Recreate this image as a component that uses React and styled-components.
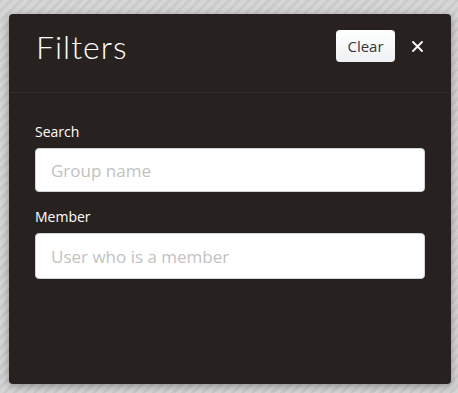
import React from "react";
import styled, { createGlobalStyle } from "styled-components";

const GlobalStyle = createGlobalStyle`
  html, body {
    margin: 0;
    padding: 0;
  }
  body {
    width: 458px;
    height: 393px;
    overflow: hidden;
    background: repeating-linear-gradient(
      -45deg,
      #d6d6d6 0px,
      #d6d6d6 4px,
      #cbcbcb 4px,
      #cbcbcb 7px
    );
  }
`;

//styled comp
const Page = styled.div`
  padding: 14px 7px 9px 9px;
`;

const Panel = styled.div`
  width: 442px;
  height: 370px;
  background: #27221f;
  border-radius: 4px;
  box-shadow: 0 2px 8px rgba(0, 0, 0, 0.35);
  display: flex;
  flex-direction: column;
`;

const Header = styled.div`
  height: 79px;
  box-sizing: border-box;
  display: flex;
  align-items: flex-start;
  padding: 16px 26px 0 27px;
  border-bottom: 1px solid #312b27;
`;

const Title = styled.h2`
  flex: 1;
  margin: 0;
  font-family: "Lato", "Open Sans", sans-serif;
  font-weight: 300;
  font-size: 32px;
  line-height: 34px;
  letter-spacing: 1px;
  color: #ffffff;
`;

const ClearButton = styled.button`
  width: 59px;
  height: 32px;
  border: none;
  border-radius: 4px;
  background: linear-gradient(#ffffff, #eef0f3);
  color: #33383d;
  font-family: "Open Sans", "Lato", sans-serif;
  font-size: 15px;
  padding: 0;
`;

const CloseButton = styled.button`
  margin-left: 14px;
  width: 16px;
  height: 32px;
  padding: 0;
  border: none;
  background: none;
  display: flex;
  align-items: center;
  justify-content: center;
`;

const Body = styled.div`
  padding: 29px 26px 0 26px;
  display: flex;
  flex-direction: column;
`;

const Field = styled.div`
  display: flex;
  flex-direction: column;
  margin-bottom: ${(p) => p.$gap || 0}px;
`;

const Label = styled.label`
  font-family: "Open Sans", "Noto Sans", sans-serif;
  font-size: 14px;
  line-height: 20px;
  color: #ffffff;
  margin-bottom: 6px;
`;

const Input = styled.input`
  box-sizing: border-box;
  height: ${(p) => p.$h || 44}px;
  width: 100%;
  border: 1px solid #cfd4da;
  border-radius: 4px;
  background: #ffffff;
  padding: 0 15px;
  font-family: "Open Sans", "Noto Sans", sans-serif;
  font-size: 17px;
  color: #333;
  outline: none;

  &::placeholder {
    color: #c2c2c2;
  }
`;

const App = () => {
  return (
    <>
      <GlobalStyle />
      <Page>
        <Panel>
          <Header>
            <Title>Filters</Title>
            <ClearButton>Clear</ClearButton>
            <CloseButton aria-label="Close">
              <svg width="11" height="11" viewBox="0 0 11 11">
                <path
                  d="M1 1 L10 10 M10 1 L1 10"
                  stroke="#ffffff"
                  strokeWidth="1.8"
                  strokeLinecap="round"
                />
              </svg>
            </CloseButton>
          </Header>
          <Body>
            <Field $gap={15}>
              <Label>Search</Label>
              <Input placeholder="Group name" />
            </Field>
            <Field>
              <Label>Member</Label>
              <Input $h={46} placeholder="User who is a member" />
            </Field>
          </Body>
        </Panel>
      </Page>
    </>
  );
};

export default App;
